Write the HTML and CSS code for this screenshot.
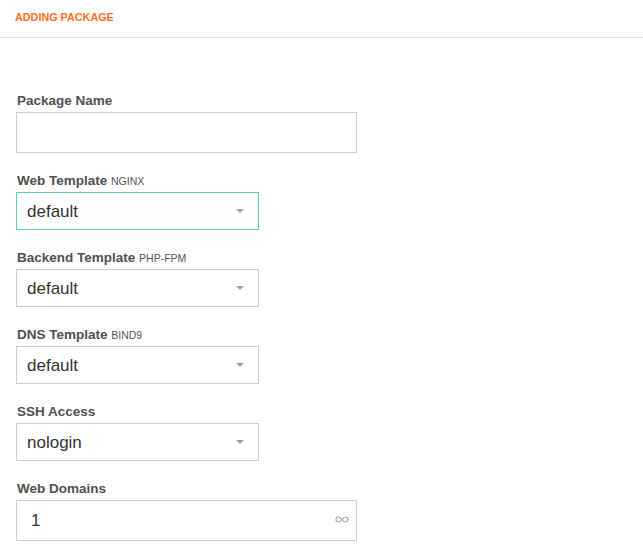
FILE: index.html
```html
<!DOCTYPE html>
<html>
<head>
<meta charset="utf-8">
<link rel="stylesheet" href="styles.css">
</head>
<body>
<div class="header">ADDING PACKAGE</div>
<div class="form">
  <div class="field">
    <label class="label">Package Name</label>
    <div class="input"></div>
  </div>
  <div class="field">
    <label class="label">Web Template <span class="hint">NGINX</span></label>
    <div class="select focused"><span class="value">default</span><span class="arrow"></span></div>
  </div>
  <div class="field">
    <label class="label">Backend Template <span class="hint">PHP-FPM</span></label>
    <div class="select"><span class="value">default</span><span class="arrow"></span></div>
  </div>
  <div class="field">
    <label class="label">DNS Template <span class="hint">BIND9</span></label>
    <div class="select"><span class="value">default</span><span class="arrow"></span></div>
  </div>
  <div class="field">
    <label class="label">SSH Access</label>
    <div class="select"><span class="value">nologin</span><span class="arrow"></span></div>
  </div>
  <div class="field">
    <label class="label">Web Domains</label>
    <div class="input num"><span class="value">1</span>
      <svg class="inf" width="14" height="7" viewBox="0 0 14 7"><path d="M7 3.5C5.6 1.6 4.6 1 3.5 1 2.1 1 1 2.1 1 3.5S2.1 6 3.5 6C4.6 6 5.6 5.4 7 3.5 8.4 1.6 9.4 1 10.5 1 11.9 1 13 2.1 13 3.5S11.9 6 10.5 6C9.4 6 8.4 5.4 7 3.5Z" fill="none" stroke="#a0a0a0" stroke-width="1.1"/></svg>
    </div>
  </div>
</div>
</body>
</html>
```
FILE: styles.css
```css
html, body {
  margin: 0;
  padding: 0;
  background: #fff;
  font-family: "Liberation Sans", Arial, sans-serif;
}
.header {
  height: 27px;
  padding: 10px 0 0 15px;
  line-height: 14px;
  font-size: 10.8px;
  font-weight: bold;
  color: #ff6d22;
  border-bottom: 1px solid #ddd;
}
.form {
  padding: 54px 16px 0 16px;
  display: flex;
  flex-direction: column;
  gap: 19px;
}
.field {
  display: flex;
  flex-direction: column;
  align-items: flex-start;
}
.label {
  display: block;
  height: 15px;
  padding: 1px 0 0 1px;
  font-size: 13.5px;
  line-height: 16px;
  font-weight: bold;
  color: #505050;
  margin-bottom: 4px;
}
.hint {
  font-size: 10.5px;
  line-height: 1;
  font-weight: normal;
  color: #555;
}
.input {
  box-sizing: border-box;
  width: 341px;
  height: 41px;
  border: 1px solid #ccc;
}
.select {
  box-sizing: border-box;
  width: 243px;
  height: 38px;
  border: 1px solid #ccc;
  display: flex;
  align-items: center;
  justify-content: space-between;
  padding: 1px 14px 0 10px;
}
.select.focused {
  border-color: #5ccfc3;
}
.value {
  font-size: 17px;
  color: #333;
}
.arrow {
  width: 0;
  height: 0;
  border-left: 4.5px solid transparent;
  border-right: 4.5px solid transparent;
  border-top: 4px solid #a0a0a0;
  margin-top: -1px;
}
.num {
  display: flex;
  align-items: center;
  justify-content: space-between;
  padding: 0 7px 0 14px;
}
.inf {
  display: block;
  margin-top: -2px;
}
```
